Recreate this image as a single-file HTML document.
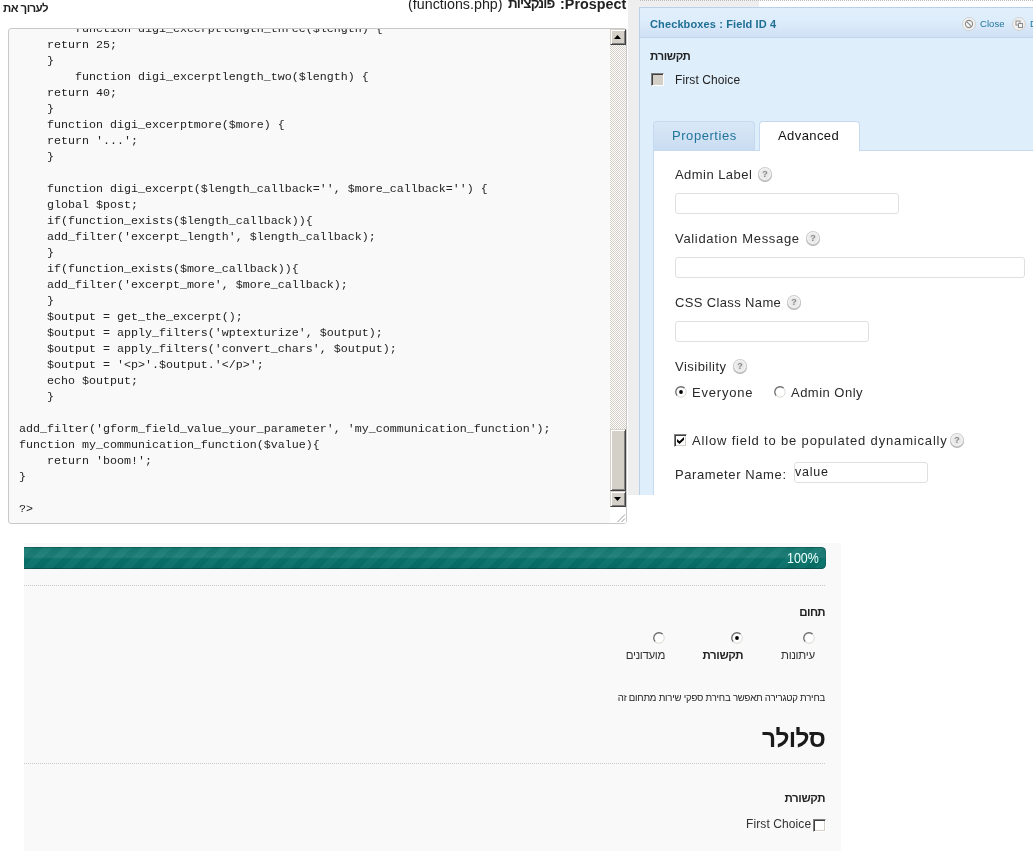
<!DOCTYPE html>
<html>
<head>
<meta charset="utf-8">
<title>screenshot</title>
<style>
html,body{margin:0;padding:0;background:#fff;}
body{width:1033px;height:854px;position:relative;overflow:hidden;font-family:"Liberation Sans",sans-serif;color:#000;}
.abs{position:absolute;white-space:nowrap;}
/* ---------- code editor ---------- */
#h-left{left:3px;top:0px;font-size:11.5px;font-weight:bold;line-height:16px;color:#222;direction:rtl;letter-spacing:-0.57px;}
.hr{top:-5px;font-size:14.3px;line-height:18px;color:#222;}
#ta{left:8px;top:28px;width:617px;height:494px;border:1px solid #c9c9c9;border-radius:3px;background:#f9f9f9;overflow:hidden;}
#code{position:absolute;left:10px;top:-8px;margin:0;font-family:"Liberation Mono",monospace;font-size:11.67px;line-height:16px;color:#222;white-space:pre;}
/* scrollbar */
#sb{left:610px;top:29px;width:16px;height:478px;background-color:#ebe9e4;background-image:repeating-conic-gradient(#d4d0c8 0% 25%, #ffffff 0% 50%);background-size:2px 2px;}
.sbtn{position:absolute;left:0;width:16px;height:16px;box-sizing:border-box;background:#d4d0c8;border:1px solid;border-color:#d4d0c8 #404040 #404040 #d4d0c8;box-shadow:inset 1px 1px 0 #fff, inset -1px -1px 0 #808080;}
#resz{left:610px;top:507px;width:16px;height:16px;background:#fff;}
/* ---------- right panel ---------- */
#gstrip{left:628px;top:0;width:12px;height:495px;background:#eee;}
#gtop{left:628px;top:0;width:131px;height:7px;background:#eee;}
#dots{left:640px;top:0;width:393px;height:1px;background-image:repeating-linear-gradient(90deg,#bbb 0 1px,transparent 1px 2px);}
#rp{left:639px;top:7px;width:394px;height:488px;background:#deeefb;border-left:1px solid #bcd0e9;border-top:1px solid #bcd0e9;box-sizing:border-box;}
#rph{left:640px;top:8px;width:393px;height:29px;background:linear-gradient(#e1effc 0,#deedfb 45%,#cfe0f5 100%);border-bottom:1px solid #c3d5ec;}
#rpt{left:650px;top:17px;font-size:11px;font-weight:bold;line-height:14px;color:#1f6f94;letter-spacing:0.12px;}
.vd{font-size:13px;line-height:16px;color:#2a2a2a;letter-spacing:0.55px;margin-top:1px;}
.inp{position:absolute;box-sizing:border-box;border:1px solid #dfdfdf;border-radius:3px;background:#fff;}
.help{position:absolute;width:12px;height:12px;border-radius:50%;background:radial-gradient(circle at 50% 50%,#e4e4e4 0,#e9e9e9 45%,#f6f6f6 80%,#fbfbfb 100%);box-shadow:0 0 0 1px #cdcdcd,0 1px 0 1px #b4b4b4;font-size:9px;font-weight:bold;line-height:12px;text-align:center;color:#888;}
/* ---------- bottom panel ---------- */
#bp{left:24px;top:543px;width:817px;height:308px;background:#f9f9f9;}
#bar{left:24px;top:547px;width:802px;height:21.5px;border-radius:0 4.5px 4.5px 0;background:
 linear-gradient(rgba(255,255,255,.05) 0,rgba(255,255,255,.09) 46%,rgba(255,255,255,0) 54%,rgba(0,0,0,.05) 100%),
 repeating-linear-gradient(135deg,rgba(255,255,255,.03) 0 7px,rgba(0,0,0,.03) 7px 14px),#08726a;box-shadow:inset 0 1px 0 rgba(0,0,0,.22), inset 0 -1px 0 rgba(0,0,0,.25), inset -1px 0 0 rgba(0,0,0,.12);}
.dl{height:1px;background-image:repeating-linear-gradient(90deg,#c8c8c8 0 1px,transparent 1px 2px);}
.heb{direction:rtl;}
</style>
</head>
<body><div id="wrap" style="position:absolute;left:0;top:0;width:1033px;height:854px;will-change:transform">

<!-- ===== code editor ===== -->
<div class="abs heb" id="h-left">לערוך את</div>
<div class="abs hr" style="left:408px">(functions.php)</div>
<div class="abs hr heb" style="left:508px;font-weight:bold;font-size:13.5px;letter-spacing:-0.85px">פונקציות</div>
<div class="abs hr" style="left:560px;font-weight:bold;letter-spacing:0.05px">:Prospect</div>
<div class="abs" id="ta"><pre id="code">        function digi_excerptlength_three($length) {
    return 25;
    }
        function digi_excerptlength_two($length) {
    return 40;
    }
    function digi_excerptmore($more) {
    return '...';
    }

    function digi_excerpt($length_callback='', $more_callback='') {
    global $post;
    if(function_exists($length_callback)){
    add_filter('excerpt_length', $length_callback);
    }
    if(function_exists($more_callback)){
    add_filter('excerpt_more', $more_callback);
    }
    $output = get_the_excerpt();
    $output = apply_filters('wptexturize', $output);
    $output = apply_filters('convert_chars', $output);
    $output = '&lt;p&gt;'.$output.'&lt;/p&gt;';
    echo $output;
    }

add_filter('gform_field_value_your_parameter', 'my_communication_function');
function my_communication_function($value){
    return 'boom!';
}

?&gt;</pre></div>
<div class="abs" id="sb">
  <div class="sbtn" style="top:0"><svg width="16" height="16" style="position:absolute;left:-1px;top:-1px"><path d="M4 10h7L7.5 6z" fill="#000"/></svg></div>
  <div class="sbtn" style="top:400px;height:62px"></div>
  <div class="sbtn" style="top:462px"><svg width="16" height="16" style="position:absolute;left:-1px;top:-1px"><path d="M4 6h7L7.5 10z" fill="#000"/></svg></div>
</div>
<div class="abs" id="resz"><svg width="16" height="16" style="position:absolute;left:0;top:0"><path d="M7.5 15L15 7.5M11.5 15L15 11.5" stroke="#999" stroke-width="1" fill="none"/></svg></div>

<!-- ===== right panel ===== -->
<div class="abs" id="gstrip"></div>
<div class="abs" id="gtop"></div>
<div class="abs" id="rp"></div>
<div class="abs" id="dots"></div>
<div class="abs" id="rph"></div>
<div class="abs" id="rpt">Checkboxes : Field ID 4</div>
<!-- close / duplicate -->
<svg class="abs" style="left:962px;top:17px" width="14" height="14" viewBox="0 0 14 14"><circle cx="7" cy="7" r="6.5" fill="#f3f3f3" stroke="#d0d0d0"/><circle cx="7" cy="7" r="3.6" fill="none" stroke="#8a8a8a" stroke-width="1.1"/><path d="M4.6 4.6L9.4 9.4" stroke="#8a8a8a" stroke-width="1.1"/></svg>
<div class="abs" style="left:980px;top:17px;font-size:9.5px;line-height:13px;color:#21759b;letter-spacing:0.05px">Close</div>
<svg class="abs" style="left:1012px;top:17px" width="14" height="14" viewBox="0 0 14 14"><circle cx="7" cy="7" r="6.5" fill="#efefef" stroke="#d0d0d0"/><rect x="4" y="4" width="4" height="4" fill="#f5f5f5" stroke="#8a8a8a"/><rect x="6.5" y="6.5" width="4" height="4" fill="#f5f5f5" stroke="#8a8a8a"/></svg>
<div class="abs" style="left:1030px;top:17px;font-size:9.5px;line-height:13px;color:#21759b;">D</div>

<div class="abs heb" style="left:650px;top:49px;font-size:11.5px;font-weight:bold;line-height:14px;color:#222;letter-spacing:-0.4px">תקשורת</div>
<div class="abs" style="left:651px;top:73px;width:13px;height:13px;box-sizing:border-box;background:#d4d0c8;border:1px solid;border-color:#808080 #fff #fff #808080;box-shadow:inset 1px 1px 0 #404040"></div>
<div class="abs" style="left:675px;top:73px;font-size:12px;line-height:15px;color:#222;letter-spacing:0.1px">First Choice</div>

<!-- tabs -->
<div class="abs" style="left:653px;top:121px;width:102px;height:29px;box-sizing:border-box;border:1px solid #c6d9ee;border-bottom:none;border-radius:4px 4px 0 0;background:linear-gradient(#d9e8f7,#cadcf1)"></div>
<div class="abs vd" style="left:672px;top:127px;color:#21759b;letter-spacing:0.55px">Properties</div>
<div class="abs" style="left:653px;top:150px;width:380px;height:345px;box-sizing:border-box;background:#fff;border-left:1px solid #c6d9ee;border-top:1px solid #c6d9ee"></div>
<div class="abs" style="left:759px;top:121px;width:101px;height:30px;box-sizing:border-box;border:1px solid #c6d9ee;border-bottom:none;border-radius:4px 4px 0 0;background:#fff"></div>
<div class="abs vd" style="left:778px;top:127px;color:#111;letter-spacing:0.41px">Advanced</div>

<!-- form -->
<div class="abs vd" style="left:675px;top:166px;letter-spacing:0.45px">Admin Label</div>
<div class="help" style="left:759px;top:168px">?</div>
<div class="inp" style="left:675px;top:193px;width:224px;height:21px"></div>

<div class="abs vd" style="left:675px;top:230px;letter-spacing:0.68px">Validation Message</div>
<div class="help" style="left:807px;top:232px">?</div>
<div class="inp" style="left:675px;top:257px;width:350px;height:21px"></div>

<div class="abs vd" style="left:675px;top:294px;letter-spacing:0.36px">CSS Class Name</div>
<div class="help" style="left:788px;top:296px">?</div>
<div class="inp" style="left:675px;top:321px;width:194px;height:21px"></div>

<div class="abs vd" style="left:675px;top:358px;letter-spacing:0.48px">Visibility</div>
<div class="help" style="left:734px;top:360px">?</div>

<svg class="abs" style="left:675px;top:386px" width="12" height="12" viewBox="0 0 12 12"><circle cx="6" cy="6" r="5" fill="#fff"/><path d="M2.3 9.7A5.2 5.2 0 0 1 9.7 2.3" fill="none" stroke="#6a6a6a" stroke-width="1.3"/><path d="M9.7 2.3A5.2 5.2 0 0 1 2.3 9.7" fill="none" stroke="#dcd9d2" stroke-width="1"/><circle cx="6" cy="6" r="1.9" fill="#000"/></svg>
<div class="abs vd" style="left:692px;top:384px;letter-spacing:0.8px">Everyone</div>
<svg class="abs" style="left:774px;top:386px" width="12" height="12" viewBox="0 0 12 12"><circle cx="6" cy="6" r="5" fill="#fff"/><path d="M2.3 9.7A5.2 5.2 0 0 1 9.7 2.3" fill="none" stroke="#6a6a6a" stroke-width="1.3"/><path d="M9.7 2.3A5.2 5.2 0 0 1 2.3 9.7" fill="none" stroke="#dcd9d2" stroke-width="1"/></svg>
<div class="abs vd" style="left:791px;top:384px;letter-spacing:0.48px">Admin Only</div>

<div class="abs" style="left:674px;top:434px;width:13px;height:13px;box-sizing:border-box;background:#fff;border:1px solid;border-color:#808080 #fff #fff #808080;box-shadow:inset 1px 1px 0 #404040, inset -1px -1px 0 #d4d0c8"><svg width="11" height="11" style="position:absolute;left:0;top:0"><path d="M2 4L4.5 6.3L9 2V4.7L4.5 9L2 6.7Z" fill="#000"/></svg></div>
<div class="abs vd" style="left:692px;top:432px;letter-spacing:0.83px">Allow field to be populated dynamically</div>
<div class="help" style="left:951px;top:434px">?</div>

<div class="abs vd" style="left:675px;top:466px;letter-spacing:0.6px">Parameter Name:</div>
<div class="inp" style="left:794px;top:462px;width:134px;height:21px"></div>
<div class="abs" style="left:795px;top:465px;font-size:12.5px;line-height:15px;color:#222;letter-spacing:0.75px">value</div>

<!-- ===== bottom panel ===== -->
<div class="abs" id="bp"></div>
<div class="abs" id="bar"></div>
<div class="abs" style="left:787px;top:550px;font-size:14px;line-height:16px;color:#eafffb;transform:scaleX(0.89);transform-origin:0 0">100%</div>
<div class="abs dl" style="left:24px;top:585px;width:802px"></div>

<div class="abs heb" style="right:208px;top:605px;font-size:11.5px;font-weight:bold;line-height:14px;color:#222;letter-spacing:-0.6px">תחום</div>

<svg class="abs" style="left:803px;top:632px" width="12" height="12" viewBox="0 0 12 12"><circle cx="6" cy="6" r="5" fill="#fff"/><path d="M2.3 9.7A5.2 5.2 0 0 1 9.7 2.3" fill="none" stroke="#6a6a6a" stroke-width="1.3"/><path d="M9.7 2.3A5.2 5.2 0 0 1 2.3 9.7" fill="none" stroke="#dcd9d2" stroke-width="1"/></svg>
<svg class="abs" style="left:731px;top:632px" width="12" height="12" viewBox="0 0 12 12"><circle cx="6" cy="6" r="5" fill="#fff"/><path d="M2.3 9.7A5.2 5.2 0 0 1 9.7 2.3" fill="none" stroke="#6a6a6a" stroke-width="1.3"/><path d="M9.7 2.3A5.2 5.2 0 0 1 2.3 9.7" fill="none" stroke="#dcd9d2" stroke-width="1"/><circle cx="6" cy="6" r="1.9" fill="#000"/></svg>
<svg class="abs" style="left:653px;top:632px" width="12" height="12" viewBox="0 0 12 12"><circle cx="6" cy="6" r="5" fill="#fff"/><path d="M2.3 9.7A5.2 5.2 0 0 1 9.7 2.3" fill="none" stroke="#6a6a6a" stroke-width="1.3"/><path d="M9.7 2.3A5.2 5.2 0 0 1 2.3 9.7" fill="none" stroke="#dcd9d2" stroke-width="1"/></svg>

<div class="abs heb" style="right:218px;top:648px;font-size:11.5px;line-height:14px;color:#333;letter-spacing:-0.25px">עיתונות</div>
<div class="abs heb" style="right:290px;top:648px;font-size:11.5px;font-weight:bold;line-height:14px;color:#222;letter-spacing:-0.4px">תקשורת</div>
<div class="abs heb" style="right:368px;top:648px;font-size:11.5px;line-height:14px;color:#333;letter-spacing:-0.35px">מועדונים</div>

<div class="abs heb" style="right:208px;top:692px;font-size:9.6px;line-height:12px;color:#222;letter-spacing:-0.22px">בחירת קטגרירה תאפשר בחירת ספקי שירות מתחום זה</div>

<div class="abs heb" style="right:208px;top:723px;font-size:24.5px;font-weight:bold;line-height:32px;color:#1a1a1a;letter-spacing:-0.75px">סלולר</div>
<div class="abs dl" style="left:24px;top:763px;width:802px"></div>

<div class="abs heb" style="right:208px;top:791px;font-size:11.5px;font-weight:bold;line-height:14px;color:#222;letter-spacing:-0.4px">תקשורת</div>
<div class="abs" style="left:746px;top:817px;font-size:12px;line-height:14px;color:#333;letter-spacing:0.1px">First Choice</div>
<div class="abs" style="left:813px;top:819px;width:13px;height:13px;box-sizing:border-box;background:#fff;border:1px solid;border-color:#808080 #fff #fff #808080;box-shadow:inset 1px 1px 0 #404040, inset -1px -1px 0 #d4d0c8"></div>

</div></body>
</html>
